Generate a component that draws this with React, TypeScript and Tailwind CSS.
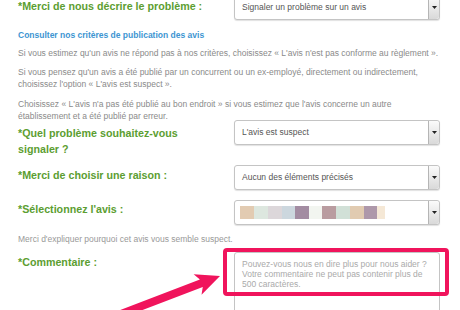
import React from 'react';

const Caret: React.FC = () => (
  <div className="w-[11px] self-stretch border-l border-[#b5b5b5] bg-gradient-to-b from-[#fbfbfb] to-[#d9d9d9] rounded-r-[3px] flex items-center justify-center">
    <svg width="5" height="3" viewBox="0 0 5 3">
      <polygon points="0,0 5,0 2.5,3" fill="#222" />
    </svg>
  </div>
);

const Select: React.FC<{ children?: React.ReactNode }> = ({ children }) => (
  <div className="w-[206px] h-[25px] border border-[#c4c4c4] rounded-[3px] bg-white flex shadow-[0_1px_1px_rgba(0,0,0,0.12)] shrink-0">
    <div className="flex-1 flex items-center pl-[7px] text-[8.5px] text-[#555]">{children}</div>
    <Caret />
  </div>
);

const Label: React.FC<{ children: React.ReactNode; pt: string }> = ({ children, pt }) => (
  <div className={`w-[216px] shrink-0 text-[10.7px] leading-[16px] font-bold text-[#5c9e31] ${pt}`}>{children}</div>
);

const swatches = [
  ['#e2cbb2', 'w-[14px]'],
  ['#dde7df', 'w-[14px]'],
  ['#dcd7da', 'w-[14px]'],
  ['#ccd7de', 'w-[13px]'],
  ['#a38ca2', 'w-[14px]'],
  ['#f2f5f0', 'w-[13px]'],
  ['#b99ca0', 'w-[14px]'],
  ['#d1e0d7', 'w-[14px]'],
  ['#e1cbb1', 'w-[14px]'],
  ['#ae98aa', 'w-[13px]'],
  ['#f5e8d6', 'w-[8px]'],
];

const App: React.FC = () => {
  return (
    <div className="w-[460px] h-[310px] overflow-hidden bg-white relative font-['Liberation_Sans',Arial,sans-serif]">
      <div className="pl-[18px] -mt-[5px]">
        <div className="flex items-start">
          <Label pt="pt-[3px]">*Merci de nous décrire le problème :</Label>
          <Select>Signaler un problème sur un avis</Select>
        </div>

        <div className="mt-[9px] text-[8.5px] leading-[12px] font-bold text-[#3d95d2]">
          Consulter nos critères de publication des avis
        </div>
        <div className="text-[8.5px] leading-[12px] text-[#8a8a8a] whitespace-nowrap">
          <p className="mt-[6px]">
            Si vous estimez qu'un avis ne répond pas à nos critères, choisissez « L'avis n'est pas conforme au règlement ».
          </p>
          <p className="mt-[7px]">
            Si vous pensez qu'un avis a été publié par un concurrent ou un ex-employé, directement ou indirectement,
            <br />
            choisissez l'option « L'avis est suspect ».
          </p>
          <p className="mt-[8px]">
            Choisissez « L'avis n'a pas été publié au bon endroit » si vous estimez que l'avis concerne un autre
            <br />
            établissement et a été publié par erreur.
          </p>
        </div>

        <div className="flex items-start -mt-[2px]">
          <Label pt="pt-[5px]">
            *Quel problème souhaitez-vous
            <br />
            signaler ?
          </Label>
          <Select>L'avis est suspect</Select>
        </div>

        <div className="flex items-start mt-[8px]">
          <Label pt="pt-[2px]">*Merci de choisir une raison :</Label>
          <Select>Aucun des éléments précisés</Select>
        </div>

        <div className="flex items-start mt-[10px]">
          <Label pt="pt-[1px]">*Sélectionnez l'avis :</Label>
          <Select>
            <div className="flex h-[13px] -ml-[2px]">
              {swatches.map(([c, w], i) => (
                <div key={i} className={`${w} h-full`} style={{ backgroundColor: c }} />
              ))}
            </div>
          </Select>
        </div>

        <div className="mt-[8px] text-[8.5px] leading-[12px] text-[#999]">
          Merci d'expliquer pourquoi cet avis vous semble suspect.
        </div>

        <div className="flex items-start mt-[7px]">
          <Label pt="pt-[2px]">*Commentaire :</Label>
          <div className="w-[206px] h-[80px] border border-[#c4c4c4] rounded-[3px] bg-white pl-[7px] pt-[6px] text-[8.5px] leading-[10px] text-[#aaa] shrink-0">
            Pouvez-vous nous en dire plus pour nous aider ?
            <br />
            Votre commentaire ne peut pas contenir plus de
            <br />
            500 caractères.
          </div>
        </div>
      </div>

      <div className="absolute left-[223px] top-[248px] w-[226px] h-[48px] border-[4px] border-[#f0145c] rounded-[4px]" />

      <svg className="absolute inset-0 pointer-events-none" width="460" height="310">
        <g transform="translate(220,276) rotate(-21)">
          <polygon points="0,0 -24,-11 -20,-4 -120,-4 -120,4 -20,4 -24,11" fill="#f0145c" />
        </g>
      </svg>
    </div>
  );
};

export default App;
